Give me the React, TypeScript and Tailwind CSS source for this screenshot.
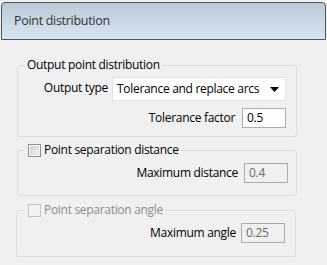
import React from "react";

const font = { fontFamily: '"Open Sans", "Noto Sans", sans-serif' };

function CheckBox({ disabled }: { disabled?: boolean }) {
  return (
    <span
      className={`inline-flex w-[13px] h-[13px] border items-center justify-center ${
        disabled ? "border-[#c4c4c4] bg-[#f4f4f4]" : "border-[#8e8f8f] bg-white"
      }`}
    >
      <span
        className={`w-[9px] h-[9px] ${
          disabled
            ? "bg-[#f2f2f2]"
            : "bg-linear-to-br from-[#cfcfcf] to-[#f7f7f7] border border-[#d8d8d8]"
        }`}
      />
    </span>
  );
}

export default function App() {
  return (
    <div
      className="w-[327px] h-[265px] bg-[#f0f0f0] text-[12px] leading-4 tracking-[-0.3px] text-black overflow-hidden"
      style={font}
    >
      {/* Header */}
      <div className="mt-[2px] mx-[1px] h-[38px] border border-[#505358] rounded-t-[4px] bg-linear-to-b from-[#bccad7] to-[#d7e4f1] flex items-center pl-[12px] text-[#333] text-[12.5px]">
        Point distribution
      </div>

      {/* Output point distribution */}
      <fieldset className="mt-[17px] ml-[17px] w-[280px] border border-[#d5dfe5] rounded-[3px] px-[6px] pb-[8px]">
        <legend className="px-[2px] ml-[1px] h-4">Output point distribution</legend>
        <div className="flex flex-col items-end gap-[7px] mt-[4px] pr-[4px]">
          <div className="flex items-center gap-[4px]">
            <span className="-mt-[2px]">Output type</span>
            <div className="w-[174px] h-[24px] bg-white border border-[#e3e3e3] flex items-center pl-[4px] pr-[6px]">
              <span className="flex-1">Tolerance and replace arcs</span>
              <svg width="9" height="5" viewBox="0 0 9 5">
                <path d="M0 0H9L4.5 5Z" fill="#000" />
              </svg>
            </div>
          </div>
          <div className="flex items-center gap-[7px]">
            <span>Tolerance factor</span>
            <div className="w-[44px] h-[20px] bg-white border border-[#abadb3] flex items-center pl-[4px]">
              0.5
            </div>
          </div>
        </div>
      </fieldset>

      {/* Point separation distance */}
      <fieldset className="mt-[5px] ml-[17px] w-[280px] border border-[#d5dfe5] rounded-[3px] px-[6px] pb-[12px]">
        <legend className="pl-[4px] pr-[2px] h-4 flex items-center gap-[3px]">
          <CheckBox />
          <span>Point separation distance</span>
        </legend>
        <div className="flex items-center justify-end gap-[6px] mt-[5px] pr-[2px]">
          <span>Maximum distance</span>
          <div className="w-[44px] h-[20px] bg-[#f0f0f0] border border-[#adadad] flex items-center pl-[4px] text-[#6d6d6d]">
            0.4
          </div>
        </div>
      </fieldset>

      {/* Point separation angle */}
      <fieldset className="mt-[6px] ml-[16px] w-[280px] border border-[#d5dfe5] rounded-[3px] px-[6px] pb-[13px]">
        <legend className="pl-[5px] pr-[2px] h-4 flex items-center gap-[3px] text-[#8d8d8d]">
          <CheckBox disabled />
          <span>Point separation angle</span>
        </legend>
        <div className="flex items-center justify-end gap-[5px] mt-[5px] pr-[4px]">
          <span>Maximum angle</span>
          <div className="w-[44px] h-[20px] bg-[#f0f0f0] border border-[#adadad] flex items-center pl-[4px] text-[#6d6d6d]">
            0.25
          </div>
        </div>
      </fieldset>
    </div>
  );
}
